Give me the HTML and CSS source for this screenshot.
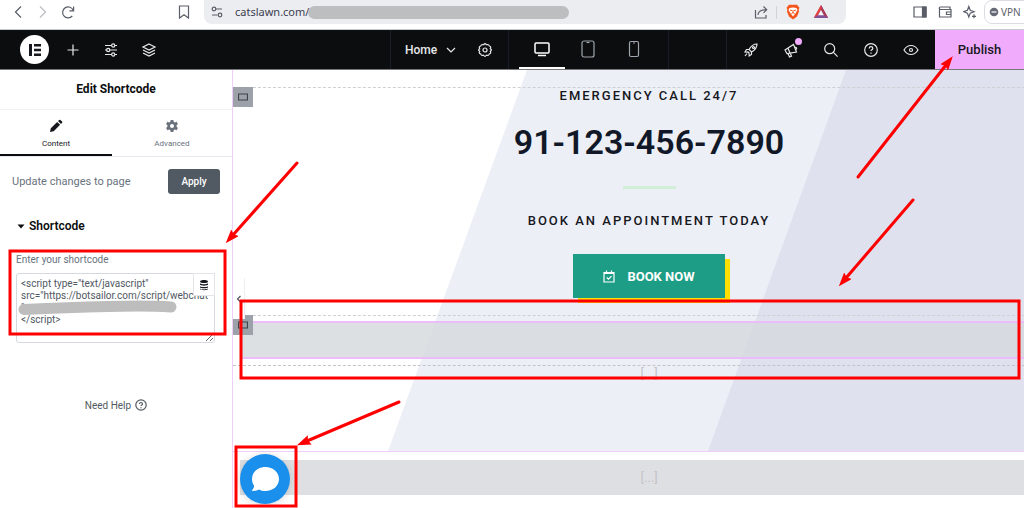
FILE: index.html
```html
<!DOCTYPE html>
<html lang="en">
<head>
    <meta charset="utf-8">
    <title>Edit Shortcode</title>
    <link rel="stylesheet" href="styles.css">
</head>
<body>

    <!-- Browser bar -->
    <div class="browser-bar">
        <div class="browser-nav">
            <button type="button" aria-label="Back"><svg width="16" height="16" viewBox="0 0 16 16"><path d="M11 2.500L5.500 8l5.500 5.500"/></svg></button>
            <button type="button" class="faded" aria-label="Forward"><svg width="16" height="16" viewBox="0 0 16 16"><path d="M5 2.500L10.500 8L5 13.500"/></svg></button>
            <button type="button" aria-label="Reload"><svg width="16" height="16" viewBox="0 0 16 16"><path d="M12.300 12A5.500 5.500 0 1 1 13.300 6.500M13.600 2.600v4.200h-4.200"/></svg></button>
        </div>
        <button type="button" class="bookmark" aria-label="Bookmark"><svg width="16" height="16" viewBox="0 0 16 16"><path d="M3.500 2h9v12L8 10.700L3.500 14z"/></svg></button>
        <div class="address">
            <svg width="14" height="14" viewBox="0 0 14 14"><circle cx="4" cy="4" r="1.800"/><path d="M6 4h6M2 10h5.500"/><circle cx="10" cy="10" r="1.800"/></svg>
            <div class="address-field">
                <input type="text" value="catslawn.com/" aria-label="Address">
                <span class="redacted"></span>
            </div>
            <button type="button" aria-label="Share"><svg width="14" height="14" viewBox="0 0 14 14"><path d="M1.500 5v8h10.500v-3M4 10C4 6.500 7 4.700 12.500 4.700M9.500 1.500l3.200 3.200l-3.200 3.200"/></svg></button>
            <span class="address-line"></span>
            <button type="button" aria-label="Shields"><svg width="16" height="16" viewBox="0 0 16 16"><path d="M4 .8h8l2.500 3l-.8 1.700l.3 2l-2 5L8 15.500L4 12.500l-2-5l.3-2L1.500 3.800z" fill="#f4561d" stroke="none"/><path d="M4.500 4l3.500-.6l3.500.6l1 2l-2 3.300L8 12.500L5.500 9.300l-2-3.300z" fill="#fff" stroke="none"/><path d="M5 6l2 .7M11 6l-2 .7M8 6v3M6.500 9.500L8 8.600l1.500.9" stroke="#f4561d" stroke-width="1"/></svg></button>
            <button type="button" aria-label="Rewards"><svg width="16" height="16" viewBox="0 0 16 16"><path d="M8 1L.8 14h14.400z" fill="#80509a" stroke="none"/><path d="M8 1L.8 14L5 11L8 5.500z" fill="#ef3f3a" stroke="none"/><path d="M8 1l7.200 13L11 11L8 5.500z" fill="#b0384f" stroke="none"/><path d="M8 6l-2.900 5.300h5.800z" fill="#f4f4f8" stroke="none"/></svg></button>
        </div>
        <div class="browser-tools">
            <button type="button" aria-label="Sidebar"><svg width="14" height="14" viewBox="0 0 14 14"><path d="M1 2h12v10H1z"/><path d="M9.500 2H13v10H9.500z" fill="#5a5e69"/></svg></button>
            <button type="button" aria-label="Wallet"><svg width="14" height="14" viewBox="0 0 14 14"><path d="M12 4.500V2H2.500a1.200 1.200 0 0 0 0 2.500H13V12H1.500V3M13 7H8.500v2.500H13"/></svg></button>
            <button type="button" aria-label="Leo AI"><svg width="14" height="14" viewBox="0 0 14 14"><path d="M5.800 1.500L7.200 5.300L11 6.700L7.200 8.100L5.800 12L4.400 8.100L.8 6.700L4.400 5.300zM11 9.300v4M9 11.300h4"/></svg></button>
            <button type="button" class="vpn"><svg width="10" height="10" viewBox="0 0 10 10"><circle cx="5" cy="5" r="4.300" fill="#656a76" stroke="none"/><path d="M2.500 5h5" stroke="#fff"/></svg>VPN</button>
        </div>
    </div>

    <!-- Editor toolbar -->
    <header class="toolbar">
        <div class="toolbar-left">
            <button type="button" class="logo" aria-label="Menu"><svg width="14" height="14" viewBox="0 0 14 14"><path d="M1 1h3v12H1zM6 1h7v2.600H6zM6 5.700h7v2.600H6zM6 10.400h7V13H6z" fill="#16181d" stroke="none"/></svg></button>
            <button type="button" aria-label="Add element"><svg width="16" height="16" viewBox="0 0 16 16"><path d="M8 2.500v11M2.500 8h11"/></svg></button>
            <button type="button" aria-label="Site settings"><svg width="16" height="16" viewBox="0 0 16 16"><path d="M2 3.500h6.500M12 3.500h2M2 8h1.500M7 8h7M2 12.500h6.500M12 12.500h2"/><circle cx="10.200" cy="3.500" r="1.600"/><circle cx="5.200" cy="8" r="1.600"/><circle cx="10.200" cy="12.500" r="1.600"/></svg></button>
            <button type="button" aria-label="Structure"><svg width="16" height="16" viewBox="0 0 16 16"><path d="M8 2l6 3l-6 3l-6-3zM2 8l6 3l6-3M2 11l6 3l6-3"/></svg></button>
        </div>
        <div class="toolbar-page">
            <button type="button" class="page-name" aria-haspopup="menu">Home<svg width="12" height="12" viewBox="0 0 12 12"><path d="M2 4l4 4l4-4"/></svg></button>
            <button type="button" aria-label="Page settings"><svg width="16" height="16" viewBox="0 0 16 16"><path d="M6.700 2.800Q8 .5 9.300 2.800Q11.900 2 12.300 4Q14.500 4.500 13.300 6.700Q15.500 8 13.300 9.300Q14.500 11.500 12.300 12Q11.900 14 9.300 13.200Q8 15.500 6.700 13.200Q4.100 14 3.700 12Q1.500 11.500 2.700 9.300Q.5 8 2.700 6.700Q1.500 4.500 3.700 4Q4.100 2 6.700 2.800z"/><circle cx="8" cy="8" r="2"/></svg></button>
        </div>
        <div class="toolbar-devices">
            <button type="button" class="device active" aria-label="Desktop"><svg width="18" height="18" viewBox="0 0 18 18"><rect x="2" y="3" width="14" height="10" rx="1" stroke-width="1.500"/><path d="M5 15.500h8" stroke-width="1.500"/></svg></button>
            <button type="button" class="device" aria-label="Tablet"><svg width="18" height="18" viewBox="0 0 18 18"><rect x="3" y="1" width="12" height="16" rx="2"/><path d="M7.500 2.500h3"/></svg></button>
            <button type="button" class="device" aria-label="Mobile"><svg width="18" height="18" viewBox="0 0 18 18"><rect x="4.500" y="1.500" width="9" height="15" rx="1.500"/><path d="M8 3h2"/></svg></button>
        </div>
        <div class="toolbar-right">
            <button type="button" aria-label="Checklist"><svg width="16" height="16" viewBox="0 0 16 16"><path d="M6 7.500C8 4 10.500 2 14 2c0 3.500-2 6-5.500 8zM6 7.500H3.500L2 10l3 .2M8.500 10v2.500L6.200 14L6 11M4.500 9.500l2 2M4 11.500L2 14"/><circle cx="10.500" cy="5.500" r="1"/></svg></button>
            <button type="button" class="news" aria-label="What's new"><svg width="16" height="16" viewBox="0 0 16 16"><path d="M2 8l8.500-5.500l3 7.500L4 11.700zM5 11.500L6.500 15l2-.8l-1.200-3M12 5.300c1.500-.3 2.300 1.400 1 2.300M5 6.200l2 4.800"/></svg><span class="dot"></span></button>
            <button type="button" aria-label="Finder"><svg width="16" height="16" viewBox="0 0 16 16"><circle cx="6.700" cy="6.700" r="5"/><path d="M10.400 10.400l4.200 4.200"/></svg></button>
            <button type="button" aria-label="Help"><svg width="16" height="16" viewBox="0 0 16 16"><circle cx="8" cy="8" r="6.300"/><path d="M6.200 6.500c0-2.400 3.600-2.400 3.600 0c0 1.300-1.800 1.300-1.800 2.600M8 10.600v1.200"/></svg></button>
            <button type="button" aria-label="Preview"><svg width="16" height="16" viewBox="0 0 16 16"><path d="M1 8c3.500-6 10.500-6 14 0c-3.500 6-10.500 6-14 0z"/><circle cx="8" cy="8" r="1.500"/></svg></button>
        </div>
        <button type="button" class="publish">Publish</button>
    </header>

    <main class="editor">
        <!-- Left panel -->
        <aside class="panel">
            <h1 class="panel-title">Edit Shortcode</h1>
            <div class="tabs">
                <button type="button" class="tab active"><svg width="14" height="14" viewBox="0 0 14 14"><path d="M1 13l.8-3.700l6.400-6.400l2.900 2.900L4.700 12.200zM9 2.100L10.200.9q.6-.5 1.200 0l1.700 1.700q.5.600 0 1.200L11.900 5z" fill="currentColor" stroke="none"/></svg>Content</button>
                <button type="button" class="tab"><svg width="14" height="14" viewBox="0 0 14 14"><path fill-rule="evenodd" d="M5.700 1h2.600l.4 1.700l1.200.7l1.700-.6l1.300 2.300L11.600 6.300v1.400l1.300 1.200l-1.300 2.300l-1.700-.6l-1.200.7L8.300 13H5.700l-.4-1.700l-1.200-.7l-1.700.6L1.100 8.900l1.300-1.200V6.300L1.100 5.100l1.300-2.300l1.700.6l1.200-.7zM7 5a2 2 0 1 0 0 4a2 2 0 0 0 0-4z" fill="currentColor" stroke="none"/></svg>Advanced</button>
            </div>
            <div class="update-row">
                <span>Update changes to page</span>
                <button type="button" class="apply">Apply</button>
            </div>
            <h2 class="section-title"><svg width="8" height="5" viewBox="0 0 8 5"><path d="M.5.500h7L4 4.500z" fill="currentColor" stroke="none"/></svg>Shortcode</h2>
            <div class="control">
                <label for="shortcode">Enter your shortcode</label>
                <div class="shortcode-box">
                    <textarea id="shortcode" spellcheck="false">&lt;script type="text/javascript"
src="https://botsailor.com/script/webchat-
"
&lt;/script&gt;</textarea>
                    <svg class="scribble" width="160" height="16" viewBox="0 0 160 16"><path d="M6 9.500Q50 7.500 90 6.500T153 7" stroke="#bdbdbd" stroke-width="11" stroke-linecap="round"/></svg>
                    <button type="button" class="dynamic" aria-label="Dynamic tags"><svg width="10" height="12" viewBox="0 0 10 12"><path d="M1 2.500c0-2 8-2 8 0s-8 2-8 0zM1 4.200c2 1.300 6 1.300 8 0v1.300c0 1.500-8 1.500-8 0zM1 7.200c2 1.200 6 1.200 8 0v1c0 1.500-8 1.500-8 0zM1 9.600c2 1.200 6 1.200 8 0v.4c0 1.600-8 1.600-8 0z" fill="#16181d" stroke="none"/></svg></button>
                </div>
            </div>
            <a class="help-link" href="#">Need Help<svg width="12" height="12" viewBox="0 0 12 12"><circle cx="6" cy="6" r="5.200"/><path d="M4.500 5c0-2 3-2 3 0c0 1-1.500 1-1.500 2M6 8.200v1"/></svg></a>
        </aside>

        <!-- Page preview -->
        <div class="preview">
            <button type="button" class="collapse" aria-label="Hide panel"><svg width="6" height="8" viewBox="0 0 6 8"><path d="M4.500 1L1.500 4l3 3"/></svg></button>
            <div class="canvas">
                <section class="hero">
                    <svg class="stripes" viewBox="0 0 832 381" preserveAspectRatio="none"><path d="M294 0H832V381H155z" fill="#edeff7"/><path d="M613 0H832V381H475z" fill="#dfe1ee"/></svg>
                    <div class="container call">
                        <span class="handle"><svg width="10" height="8" viewBox="0 0 10 8"><path d="M.5 1h9v6h-9z"/></svg></span>
                        <p class="lead">EMERGENCY CALL 24/7</p>
                        <p class="phone">91-123-456-7890</p>
                        <hr class="divider">
                        <p class="lead">BOOK AN APPOINTMENT TODAY</p>
                        <a class="book" href="#"><svg width="12" height="13" viewBox="0 0 12 13"><path d="M1 2.500h10V12H1zM1 3.500h10M3.500.5v2M8.500.5v2M3.800 7.500l1.700 1.700l3-3"/></svg>BOOK NOW</a>
                    </div>
                    <div class="container widget">
                        <span class="handle"><svg width="10" height="8" viewBox="0 0 10 8"><path d="M.5 1h9v6h-9z"/></svg></span>
                        <div class="widget-block"></div>
                    </div>
                    <p class="placeholder">[...]</p>
                </section>
                <div class="shortcode-slot">[...]</div>
            </div>
            <button type="button" class="chat" aria-label="Open chat"><svg width="30" height="28" viewBox="0 0 30 28"><path d="M15.500 2C23 2 29 7 29 14s-6 12-13.500 12c-2.500 0-4.500-.4-6.500-1.500c-2 1-4.500 1.700-7.500 1.300c1.500-1.500 2.500-2.800 2.600-5C2.700 18.900 2 16.500 2 14C2 7 8 2 15.500 2z" fill="#fff" stroke="none"/></svg></button>
        </div>
    </main>

    <!-- Red boxes and arrows -->
    <svg class="notes" width="1024" height="508" viewBox="0 0 1024 508">
        <defs>
            <marker id="head" markerUnits="userSpaceOnUse" markerWidth="14" markerHeight="10" refX="3" refY="5" orient="auto"><path d="M0 0L14 5L0 10L2 5z" fill="#fe0000" stroke="none"/></marker>
        </defs>
        <rect x="10" y="251" width="215" height="83"/>
        <rect x="241" y="301" width="778" height="77"/>
        <rect x="236" y="447" width="60" height="59"/>
        <path d="M297 163L233 235" marker-end="url(#head)"/>
        <path d="M858 177L946 65" marker-end="url(#head)"/>
        <path d="M913 200L846 278" marker-end="url(#head)"/>
        <path d="M399 402L307 441" marker-end="url(#head)"/>
    </svg>

</body>
</html>
```

FILE: styles.css
```css
* {
    box-sizing: border-box;
}

body {
    margin: 0;
    height: 100vh;
    display: flex;
    flex-direction: column;
    overflow: hidden;
    position: relative;
    background-color: #fff;
    color: #515962;
    font-family: Roboto, Arial, sans-serif;
    font-size: 11px;
}

button, input, textarea {
    font-family: inherit;
    font-size: inherit;
    color: inherit;
}

button {
    display: flex;
    align-items: center;
    justify-content: center;
    flex: none;
    padding: 0;
    border: none;
    background: none;
    cursor: pointer;
}

h1, h2, p {
    margin: 0;
}

svg {
    display: block;
    flex: none;
    fill: none;
    stroke: currentColor;
    stroke-width: 1.2;
}

/* Browser bar */
.browser-bar {
    display: flex;
    height: 30px;
    flex: none;
    padding-bottom: 5px;
    border-bottom: 1px solid #c9cacc;
    color: #5a5e69;
    font-family: "Noto Sans", sans-serif;
}

.browser-nav {
    display: flex;
    gap: 9px;
    padding-left: 10px;
}

.faded {
    opacity: 0.4;
}

.bookmark {
    margin: 0 12px 0 100px;
}

.address {
    display: flex;
    align-items: center;
    flex: 1;
    gap: 8px;
    padding: 0 17px 0 6px;
    background-color: #ecedf1;
    border-radius: 0 0 8px 8px;
}

.address-field {
    flex: 1;
    position: relative;
    padding-left: 3px;
}

.address-field input {
    display: block;
    width: 100%;
    padding: 0;
    border: none;
    background: none;
    color: #3b3e4f;
    font-size: 11px;
    line-height: 16px;
}

.redacted {
    position: absolute;
    left: 76px;
    top: 2px;
    width: 261px;
    height: 13px;
    border-radius: 7px;
    background-color: #bdbebf;
}

.address-line {
    width: 1px;
    height: 13px;
    background-color: #d2d3da;
}

.address button + button {
    margin-left: 4px;
}

.browser-tools {
    display: flex;
    align-items: center;
    gap: 11px;
    width: 178px;
    padding-left: 67px;
}

.vpn {
    justify-content: flex-start;
    gap: 2px;
    width: 48px;
    height: 24px;
    margin-left: -4px;
    padding-left: 4px;
    border: 1px solid #dcdde3;
    border-radius: 8px;
    font-size: 10px;
}

/* Toolbar */
.toolbar {
    display: flex;
    flex: none;
    height: 40px;
    background-color: #0c0d0e;
    border-bottom: 1px solid #77787c;
    color: #e6e8ea;
}

.toolbar-left {
    display: flex;
    align-items: center;
    flex: 1;
    gap: 22px;
    padding-left: 20px;
}

.logo {
    width: 29px;
    height: 29px;
    margin-right: -6px;
    border-radius: 50%;
    background-color: #fff;
}

.toolbar-page {
    display: flex;
    align-items: center;
    justify-content: space-between;
    width: 118px;
    padding: 0 15px 0 14px;
    border-left: 1px solid #1b1c2b;
}

.page-name {
    gap: 8px;
    font-size: 12px;
    font-weight: 500;
}

.toolbar-devices {
    display: flex;
    width: 161px;
    padding-left: 10px;
    border-left: 1px solid #1b1c2b;
    border-right: 1px solid #1b1c2b;
}

.device {
    width: 46px;
    border-bottom: 2px solid transparent;
    color: #9da5ae;
}

.device.active {
    border-color: #fff;
    color: #fff;
}

.toolbar-right {
    display: flex;
    align-items: center;
    gap: 24px;
    margin-left: 57px;
    padding: 0 16px;
    border-left: 1px solid #1b1c2b;
}

.news {
    position: relative;
}

.dot {
    position: absolute;
    top: -4px;
    right: -3px;
    width: 7px;
    height: 7px;
    border-radius: 50%;
    background-color: #f0abfc;
}

.publish {
    width: 89px;
    background-color: #f0abfc;
    color: #16181d;
    font-size: 13px;
    font-weight: 500;
}

/* Left panel */
.editor {
    display: flex;
    flex: 1;
    min-height: 0;
}

.panel {
    flex: none;
    width: 232px;
}

.panel-title {
    padding: 11px 0 12px;
    border-bottom: 1px solid #f1f2f3;
    color: #0c0d0e;
    font-size: 12px;
    font-weight: 700;
    line-height: 16px;
    text-align: center;
}

.tabs {
    display: flex;
    border-bottom: 1px solid #e6e8ee;
}

.tab {
    flex: 1;
    flex-direction: column;
    gap: 5px;
    padding: 9px 0 4px;
    border-bottom: 2px solid transparent;
    color: #69727d;
    font-size: 8px;
    line-height: 12px;
}

.tab.active {
    flex: none;
    width: 112px;
    border-color: #0c0d0e;
    color: #16181d;
}

.update-row {
    display: flex;
    align-items: center;
    justify-content: space-between;
    padding: 12px;
    color: #69727d;
}

.apply {
    width: 52px;
    height: 25px;
    border-radius: 3px;
    background-color: #515962;
    color: #fff;
    font-size: 10px;
    font-weight: 500;
}

.section-title {
    display: flex;
    align-items: center;
    gap: 4px;
    padding: 12px 17px;
    color: #0c0d0e;
    font-size: 12px;
    font-weight: 600;
    line-height: 16px;
}

.control {
    padding: 6px 17px 0 16px;
    font-size: 10px;
}

.control label {
    display: block;
    line-height: 16px;
    margin-bottom: 5px;
    color: #69727d;
}

.shortcode-box {
    position: relative;
}

textarea {
    display: block;
    width: 100%;
    height: 70px;
    padding: 4px;
    border: 1px solid #d5d8dc;
    border-radius: 3px;
    background-color: #fff;
    line-height: 12px;
    white-space: pre;
    overflow: hidden;
    resize: vertical;
}

.scribble {
    position: absolute;
    left: 2px;
    top: 27px;
}

.dynamic {
    position: absolute;
    top: 0;
    right: 0;
    width: 22px;
    height: 23px;
    border: 1px solid #e3e5e8;
    background-color: #fff;
}

.help-link {
    display: flex;
    align-items: center;
    justify-content: center;
    gap: 4px;
    margin-top: 56px;
    color: #515962;
    font-size: 10px;
    text-decoration: none;
}

/* Preview */
.preview {
    flex: 1;
    min-width: 0;
    position: relative;
    overflow: hidden;
    border-left: 1px solid #f1cdf9;
}

/* The page is wider than the space left by the panel */
.canvas {
    width: calc(100% + 41px);
}

.hero {
    position: relative;
    height: 382px;
    padding-top: 17px;
    border-bottom: 1px solid #f1cdf9;
}

.stripes {
    position: absolute;
    left: 0;
    top: 0;
    width: 100%;
    height: 100%;
    stroke: none;
}

.container {
    position: relative;
    border-top: 1px dashed #cfd0d3;
}

.call {
    display: flex;
    flex-direction: column;
    align-items: center;
    height: 228px;
    color: #16181d;
}

.handle {
    position: absolute;
    left: 0;
    top: -1px;
    display: flex;
    align-items: center;
    justify-content: center;
    width: 20px;
    height: 20px;
    background-color: #9da1aa;
    color: #3f444b;
}

.lead {
    font-size: 13px;
    font-weight: 500;
    line-height: 16px;
    letter-spacing: 2px;
}

.phone {
    margin: 18px 0 24px;
    color: #111827;
    font-size: 34px;
    font-weight: 600;
    line-height: 40px;
}

.divider {
    width: 53px;
    height: 3px;
    margin: 0 0 24px;
    border: none;
    background-color: #d2edd8;
}

.book {
    display: flex;
    align-items: center;
    justify-content: center;
    gap: 12px;
    width: 152px;
    height: 44px;
    margin-top: 25px;
    background-color: #1d9d85;
    box-shadow: 5px 5px 0 #ffdf00;
    color: #fff;
    font-size: 13px;
    font-weight: 700;
    text-decoration: none;
}

.widget {
    padding: 5px 0 6px 7px;
    border-bottom: 1px dashed #c3c4c8;
}

.widget-block {
    height: 38px;
    border: 2px solid #edbdf9;
    background-color: rgba(213, 216, 220, 0.8);
}

.placeholder {
    position: relative;
    color: #c3c4c8;
    font-size: 13px;
    line-height: 16px;
    text-align: center;
}

.shortcode-slot {
    margin: 8px 0 0 7px;
    padding-right: 7px;
    background-color: #dedfe2;
    color: #c3c4c8;
    font-size: 13px;
    line-height: 35px;
    text-align: center;
}

.collapse {
    position: absolute;
    z-index: 1;
    left: 0;
    top: 208px;
    width: 12px;
    height: 41px;
    border-right: 1px solid #eceef2;
    background-color: #fff;
}

.chat {
    position: absolute;
    left: 7px;
    top: 384px;
    width: 50px;
    height: 50px;
    border-radius: 50%;
    background-color: #1b8fec;
    box-shadow: 0 1px 8px rgba(0, 0, 0, 0.15);
}

/* Annotations lie over the whole page */
.notes {
    position: absolute;
    z-index: 2;
    left: 0;
    top: 0;
    stroke: #fe0000;
    stroke-width: 3;
    stroke-linecap: round;
    pointer-events: none;
}
```
